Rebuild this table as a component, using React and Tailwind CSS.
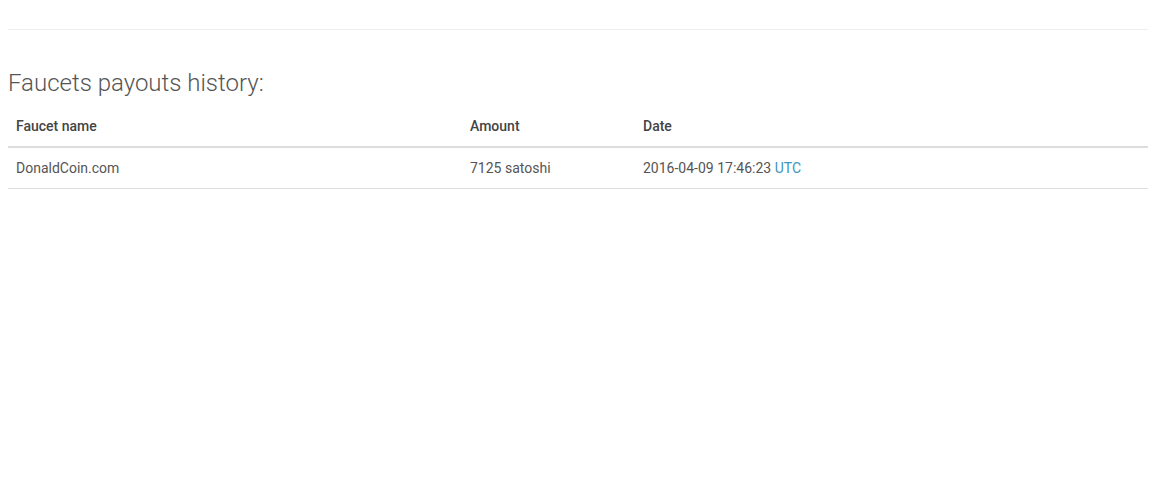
import React from 'react';

const rows = [
    { name: 'DonaldCoin.com', amount: '7125 satoshi', date: '2016-04-09 17:46:23' },
];

export default function App() {
    return (
        <div className="min-h-[480px] bg-white font-['Roboto','Liberation_Sans',sans-serif] text-[14px] leading-[24px] text-[#555]">
            <div className="w-[1140px] ml-2 pt-[29px]">
                <hr className="border-0 border-t border-[#eee]" />
                <h3 className="mt-10 mb-[10px] text-[24px] leading-[26.4px] font-light text-[#555]">
                    Faucets payouts history:
                </h3>
                <table className="w-full border-collapse text-left">
                    <thead>
                        <tr className="border-b-2 border-[#ddd]">
                            <th className="w-[454px] p-2 font-medium text-[#444]">Faucet name</th>
                            <th className="w-[173px] p-2 font-medium text-[#444]">Amount</th>
                            <th className="p-2 font-medium text-[#444]">Date</th>
                        </tr>
                    </thead>
                    <tbody>
                        {rows.map((r) => (
                            <tr key={r.name} className="border-b border-[#ddd]">
                                <td className="p-2">{r.name}</td>
                                <td className="p-2">{r.amount}</td>
                                <td className="p-2">
                                    {r.date} <span className="text-[#3d94c4]">UTC</span>
                                </td>
                            </tr>
                        ))}
                    </tbody>
                </table>
            </div>
        </div>
    );
}
